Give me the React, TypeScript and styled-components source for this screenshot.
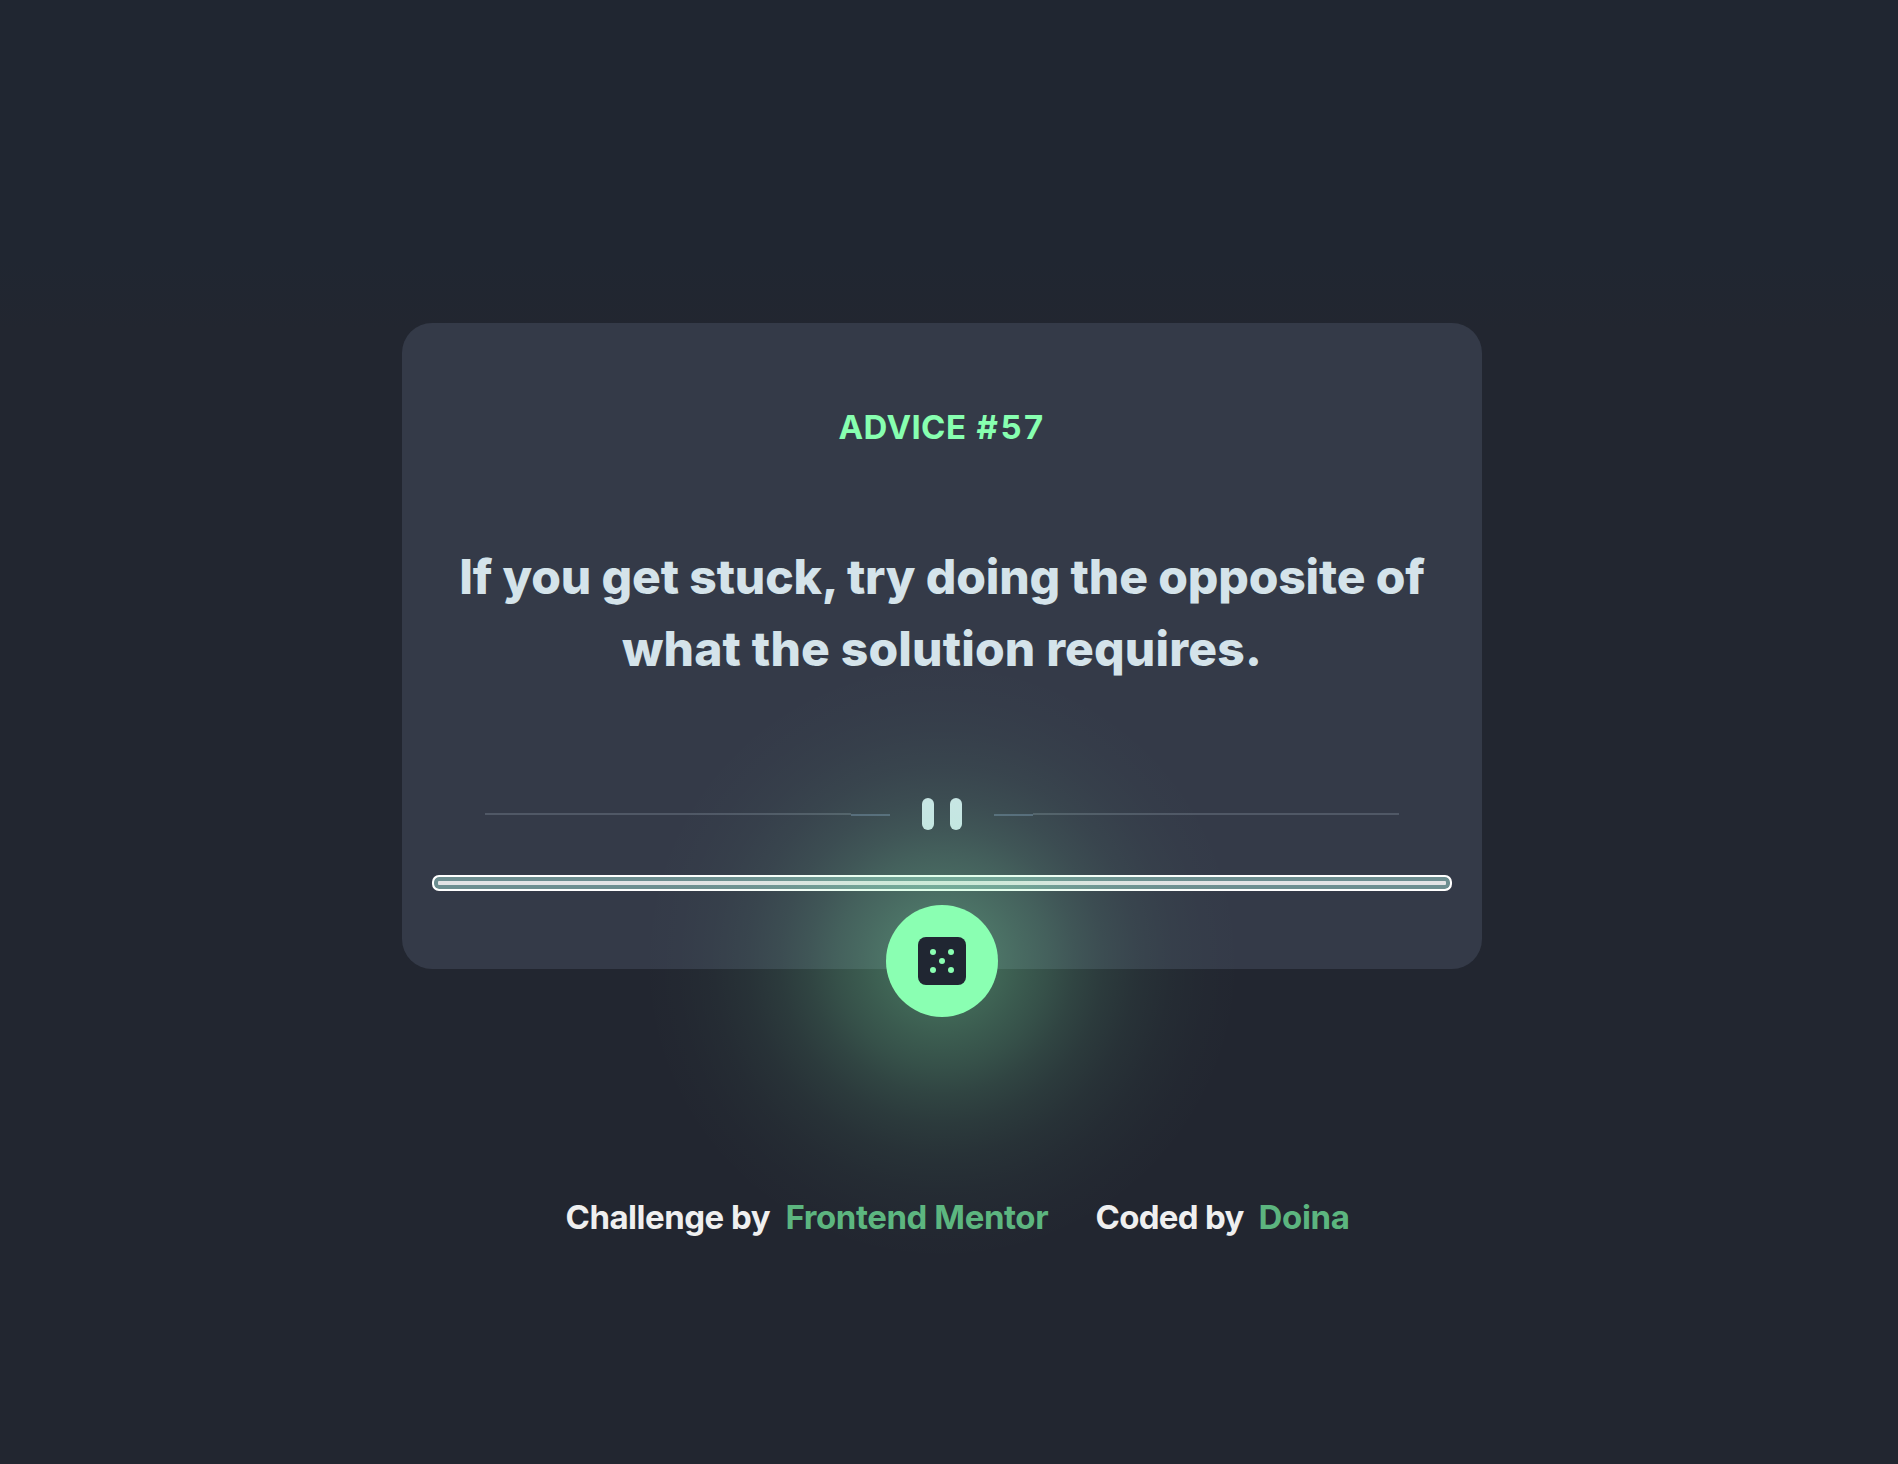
import React from 'react';
import styled, { createGlobalStyle } from 'styled-components';

const GlobalStyle = createGlobalStyle`
  * { box-sizing: border-box; }
  body { margin: 0; background: #222630; font-family: Inter, "Liberation Sans", sans-serif; }
`;
const Page = styled.main`
  min-height: 1464px;
  padding: 323px 0 0 402px;
  background: linear-gradient(#202631, #202631 260px, #222630 330px);
`;
const Card = styled.section`
  display: flex;
  flex-direction: column;
  align-items: center;
  width: 1080px;
  height: 646px;
  padding: 84px 30px 0;
  border-radius: 30px;
  background: #343a48;
`;
const Title = styled.h1`
  margin: 0;
  font-size: 33px;
  font-weight: 700;
  line-height: 40px;
  color: #87ffb0;
  white-space: pre;
`;
const Quote = styled.p`
  margin: 94px 0 0;
  display: flex;
  flex-direction: column;
  align-items: center;
  font-size: 48px;
  font-weight: 800;
  line-height: 72px;
  color: #d4e3ea;
  white-space: nowrap;
`;
const Run = styled.span<{ $spacing: number }>`
  letter-spacing: ${p => p.$spacing}px;
`;
const Divider = styled.svg`
  display: block;
  flex: none;
  width: 914px;
  height: 32px;
  margin-top: 113px;
`;
const Bar = styled.hr`
  flex: none;
  width: 1020px;
  height: 16px;
  margin: 45px 0 0;
  border: 2px solid #fff;
  border-radius: 7px;
  background: #e3e3e5;
  box-shadow: inset 0 0 0 4px #6d8e90;
`;
const Dice = styled.button`
  position: relative;
  isolation: isolate;
  flex: none;
  display: grid;
  place-items: center;
  width: 112px;
  height: 112px;
  margin-top: 14px;
  padding: 0;
  border: 0;
  border-radius: 50%;
  background: none;

  &::before {
    content: '';
    position: absolute;
    inset: -244px;
    z-index: -2;
    border-radius: 50%;
    pointer-events: none;
    background: radial-gradient(
      circle closest-side,
      rgba(135, 255, 176, .33) 0,
      rgba(135, 255, 176, .29) 56px,
      rgba(135, 255, 176, .245) 80px,
      rgba(135, 255, 176, .195) 106px,
      rgba(135, 255, 176, .142) 133px,
      rgba(135, 255, 176, .095) 162px,
      rgba(135, 255, 176, .053) 195px,
      rgba(135, 255, 176, .026) 230px,
      rgba(135, 255, 176, .01) 262px,
      rgba(135, 255, 176, 0) 300px
    );
  }

  &::after {
    content: '';
    position: absolute;
    inset: 0;
    z-index: -1;
    border-radius: 50%;
    background: #8affb2;
  }
`;
const Footer = styled.footer`
  display: flex;
  margin: 228px 0 0 163.5px;
  font-size: 33px;
  font-weight: 700;
  line-height: 40px;
  white-space: nowrap;
`;
const Credit = styled.span<{ $width: number; $spacing: number; $link?: boolean }>`
  width: ${p => p.$width}px;
  letter-spacing: ${p => p.$spacing}px;
  color: ${p => (p.$link ? '#5cb57f' : '#efefef')};
`;

export default function App() {
  return (
    <>
      <GlobalStyle />
      <Page>
        <Card>
          <Title>
            <Run $spacing={0.4}>ADVICE</Run>
            <Run $spacing={2.4}> #57</Run>
          </Title>
          <Quote>
            <Run $spacing={-0.15}>If you get stuck, try doing the opposite of</Run>
            <Run $spacing={0.16}>what the solution requires.</Run>
          </Quote>
          <Divider viewBox="0 0 914 32">
            <path d="M0 16H366M548 16H914" stroke="#505866" strokeWidth="2" />
            <path d="M366 17H405M509 17H548" stroke="#536177" strokeWidth="2" />
            <rect x="437" width="12" height="32" rx="6" fill="#cee3e9" />
            <rect x="465" width="12" height="32" rx="6" fill="#cee3e9" />
          </Divider>
          <Bar />
          <Dice aria-label="New advice">
            <svg width="48" height="48" viewBox="0 0 24 24">
              <rect width="24" height="24" rx="4" fill="#202632" />
              <g fill="#8affb2">
                <circle cx="7.5" cy="7.5" r="1.5" />
                <circle cx="16.5" cy="7.5" r="1.5" />
                <circle cx="12" cy="12" r="1.5" />
                <circle cx="7.5" cy="16.5" r="1.5" />
                <circle cx="16.5" cy="16.5" r="1.5" />
              </g>
            </svg>
          </Dice>
        </Card>
        <Footer>
          <Credit $width={220} $spacing={-0.5}>Challenge by</Credit>
          <Credit $width={310} $spacing={-0.43} $link>Frontend Mentor</Credit>
          <Credit $width={163} $spacing={-0.7}>Coded by</Credit>
          <Credit $width={100} $spacing={-0.3} $link>Doina</Credit>
        </Footer>
      </Page>
    </>
  );
}
